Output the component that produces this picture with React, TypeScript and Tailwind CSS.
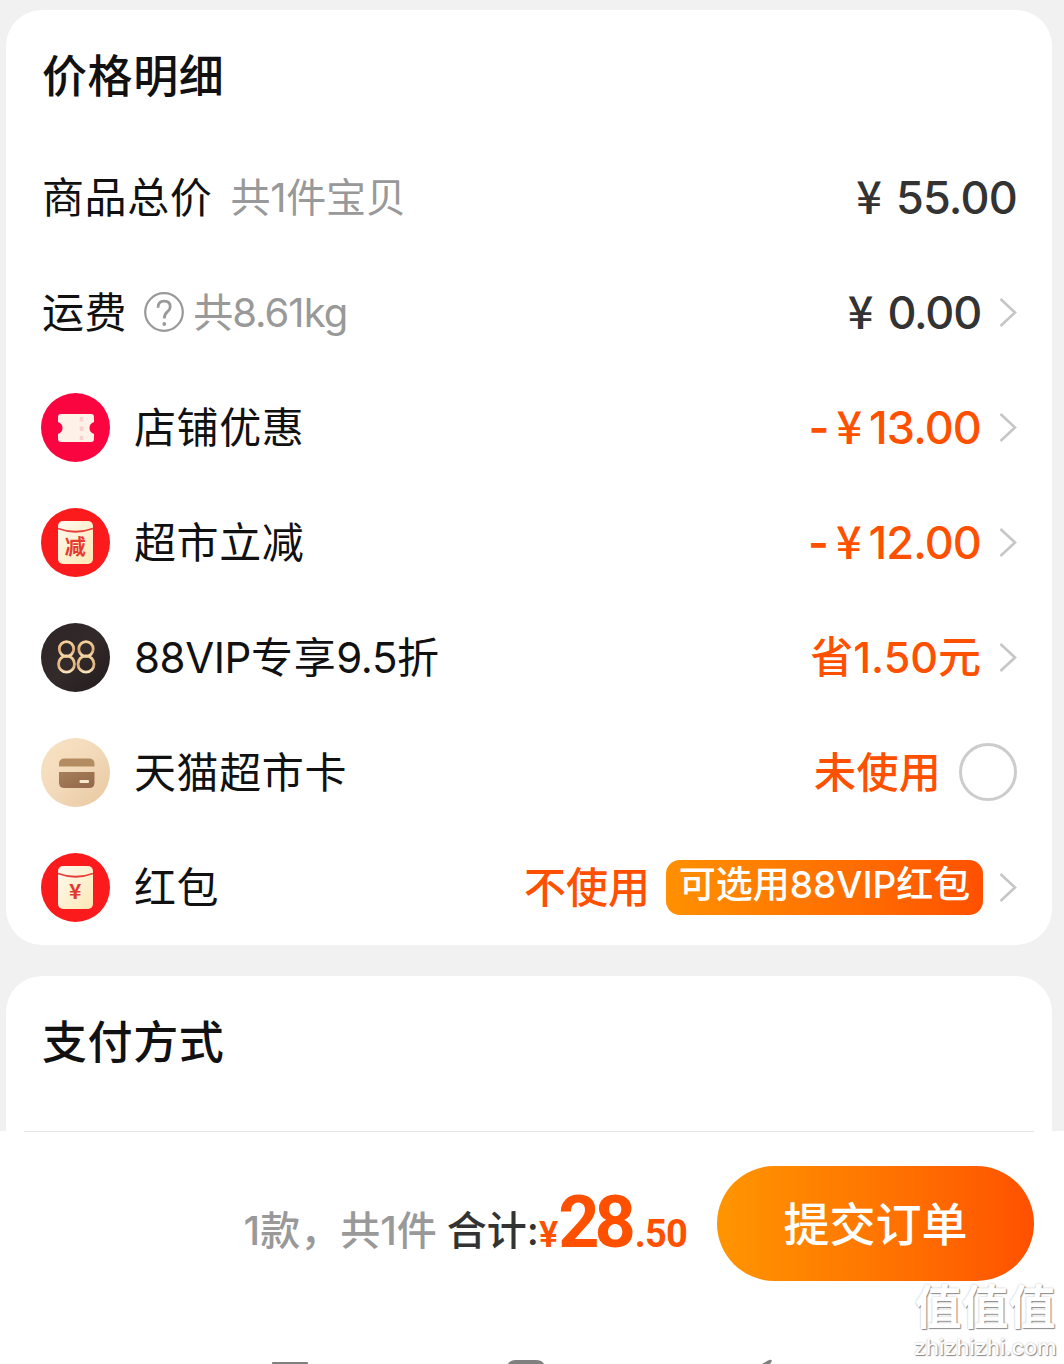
import React from 'react';

type RowIcon = 'coupon' | 'minus' | 'vip' | 'card' | 'packet';

interface RowProps {
  icon?: RowIcon;
  label: React.ReactNode;
  children: React.ReactNode;
}

const Envelope: React.FC<{ id: string }> = ({ id }) => (
  <>
    <defs>
      <linearGradient id={id} x1="0" y1="0" x2="1" y2="1">
        <stop offset="0" stopColor="#fffaf0" />
        <stop offset="1" stopColor="#fce8b4" />
      </linearGradient>
    </defs>
    <circle cx="34.5" cy="34.5" r="34.5" fill="#fb1a1c" />
    <rect x="17" y="13" width="35" height="43" rx="5" fill={`url(#${id})`} />
    <path d="M17 20.5 Q34.5 27 52 20.5" fill="none" stroke="#e8403a" strokeWidth="1.8" />
  </>
);

const Badge: React.FC<{ type: RowIcon }> = ({ type }) => (
  <svg viewBox="0 0 69 69" className="h-[69px] w-[69px] shrink-0">
    {type === 'coupon' && (
      <>
        <circle cx="34.5" cy="34.5" r="34.5" fill="#fb0540" />
        <path
          d="M20 21 H50 Q53 21 53 24 V29 Q48.5 30.5 48.5 35 Q48.5 39.5 53 41 V46 Q53 49 50 49 H20 Q17 49 17 46 V41 Q21.5 39.5 21.5 35 Q21.5 30.5 17 29 V24 Q17 21 20 21 Z"
          fill="#fdf1e8"
        />
        <path d="M40.5 24 V47" stroke="#fbcfcd" strokeWidth="3.5" strokeDasharray="4.5 5" />
      </>
    )}
    {type === 'minus' && (
      <>
        <Envelope id="env-minus" />
        <text x="34.5" y="46" textAnchor="middle" fontSize="21" fontWeight="700" fill="#e8392f" fontFamily="'Noto Sans CJK SC', sans-serif">
          减
        </text>
      </>
    )}
    {type === 'vip' && (
      <>
        <defs>
          <linearGradient id="vip-bg" x1="0" y1="0" x2="1" y2="1">
            <stop offset="0" stopColor="#2c2526" />
            <stop offset="0.5" stopColor="#332a2a" />
            <stop offset="1" stopColor="#231c1c" />
          </linearGradient>
          <linearGradient id="vip-line" x1="0" y1="0" x2="0" y2="1">
            <stop offset="0" stopColor="#f6d39c" />
            <stop offset="0.6" stopColor="#dcae78" />
            <stop offset="1" stopColor="#fbe5be" />
          </linearGradient>
        </defs>
        <circle cx="34.5" cy="34.5" r="34.5" fill="url(#vip-bg)" />
        <g fill="none" stroke="url(#vip-line)" strokeWidth="2.8">
          <ellipse cx="25.5" cy="26" rx="7.2" ry="7.4" />
          <ellipse cx="25.5" cy="41" rx="8" ry="8.2" />
          <ellipse cx="45" cy="26" rx="7.2" ry="7.4" />
          <ellipse cx="45" cy="41" rx="8" ry="8.2" />
        </g>
      </>
    )}
    {type === 'card' && (
      <>
        <defs>
          <linearGradient id="card-bg" x1="0" y1="0" x2="1" y2="1">
            <stop offset="0" stopColor="#f9e3c4" />
            <stop offset="0.5" stopColor="#f2d9b9" />
            <stop offset="1" stopColor="#e8c79f" />
          </linearGradient>
          <linearGradient id="card-fill" x1="0" y1="0" x2="1" y2="1">
            <stop offset="0" stopColor="#a67f5b" />
            <stop offset="1" stopColor="#936749" />
          </linearGradient>
        </defs>
        <circle cx="34.5" cy="34.5" r="34.5" fill="url(#card-bg)" />
        <path d="M18 28.5 V26 Q18 20.5 23.5 20.5 H48 Q53.5 20.5 53.5 26 V28.5 Z" fill="#b38d61" />
        <path d="M18 34 H53.5 V44.5 Q53.5 50 48 50 H23.5 Q18 50 18 44.5 Z" fill="url(#card-fill)" />
        <rect x="38.5" y="42" width="9.5" height="3" rx="1" fill="#f8e6cf" />
      </>
    )}
    {type === 'packet' && (
      <>
        <Envelope id="env-packet" />
        <text x="34.5" y="46" textAnchor="middle" fontSize="21" fontWeight="700" fill="#e03a34" fontFamily="'Noto Sans CJK SC', sans-serif">
          ¥
        </text>
      </>
    )}
  </svg>
);

const Chevron = () => (
  <svg viewBox="0 0 18 30" className="ml-[18px] h-[30px] w-[18px] shrink-0">
    <path d="M1.5 1 L16 14.5 L1.5 28" fill="none" stroke="#c6c6c6" strokeWidth="2.6" />
  </svg>
);

const Yen = () => <span className="mb-[7px] font-['Noto_Sans_CJK_SC',sans-serif] text-[45px] font-medium">¥</span>;

const Row: React.FC<RowProps> = ({ icon, label, children }) => (
  <div className="flex h-[115px] items-center justify-between">
    <div className="flex items-center text-[42px] leading-none tracking-[0.6px] text-[#111]">
      {icon && (
        <span className="mr-6">
          <Badge type={icon} />
        </span>
      )}
      {label}
    </div>
    <div className="flex items-center text-[45px] leading-none font-medium text-[#ff5000]">{children}</div>
  </div>
);

export default function App() {
  return (
    <div className="relative flex h-[1364px] w-[1064px] flex-col overflow-hidden bg-[#f1f1f1] font-[Inter,'Noto_Sans_CJK_SC',sans-serif] leading-none whitespace-nowrap">
      {/* Price details */}
      <section className="mt-[10px] mr-3 ml-1.5 h-[935px] rounded-[36px] bg-white px-[35px]">
        <h2 className="flex h-[132px] items-center pl-px text-[45px] font-medium tracking-[0.6px] text-[#111]">价格明细</h2>

        <div className="-mt-0.5">
          <Row
            label={
              <>
                <span className="pl-px">商品总价</span>
                <span className="ml-[18px] text-[40px] tracking-[-0.2px] text-[#999]">共1件宝贝</span>
              </>
            }
          >
            <span className="flex items-center gap-3.5 text-[#333]">
              <Yen />
              <span className="tracking-[-0.8px]">55.00</span>
            </span>
          </Row>

          <Row
            label={
              <>
                <span className="pl-px">运费</span>
                <svg viewBox="0 0 40 40" className="mr-[9px] mb-0.5 ml-[17px] h-10 w-10" fill="none" stroke="#999" strokeWidth="2.2">
                  <circle cx="20" cy="20" r="18.8" />
                  <path d="M14 15.8 Q14 9.2 20.2 9.2 Q26.2 9.2 26.2 14.8 Q26.2 17.4 23.5 19.6 Q20.3 22 20.3 26.5" strokeWidth="2.8" />
                  <circle cx="20.3" cy="32" r="1.2" fill="#999" strokeWidth="1.4" />
                </svg>
                <span className="text-[40px] tracking-[-1px] text-[#999]">共8.61kg</span>
              </>
            }
          >
            <span className="flex items-center gap-3.5 text-[#333]">
              <Yen />
              <span className="tracking-[-1.2px]">0.00</span>
            </span>
            <Chevron />
          </Row>

          <Row icon="coupon" label="店铺优惠">
            <span className="mr-[7px] font-semibold">-</span>
            <Yen />
            <span className="ml-[7px] tracking-[-0.9px]">13.00</span>
            <Chevron />
          </Row>

          <Row icon="minus" label="超市立减">
            <span className="mr-[7px] font-semibold">-</span>
            <Yen />
            <span className="ml-[7px] tracking-[-0.9px]">12.00</span>
            <Chevron />
          </Row>

          <Row
            icon="vip"
            label={
              <span>
                <span className="tracking-[-0.4px]">88VIP</span>专享<span className="tracking-[-0.4px]">9.5</span>折
              </span>
            }
          >
            <span className="text-[43px]">省1.50元</span>
            <Chevron />
          </Row>

          <Row icon="card" label="天猫超市卡">
            <span className="text-[42px] tracking-[0.3px]">未使用</span>
            <span className="mb-0.5 ml-[18px] h-[58px] w-[58px] rounded-full border-[3px] border-[#ccc]" />
          </Row>

          <Row icon="packet" label="红包">
            <span className="text-[42px]">不使用</span>
            <span className="-mr-0.5 ml-4 flex h-[55px] w-[317px] items-center justify-center rounded-[14px] bg-linear-to-r from-[#ff9000] to-[#ff5000] pb-1.5 text-[37px] text-white">
              可选用88VIP红包
            </span>
            <Chevron />
          </Row>
        </div>
      </section>

      {/* Payment method */}
      <section className="mt-[31px] mr-3 ml-1.5 h-[155px] shrink-0 rounded-t-[36px] bg-white px-[35px]">
        <h2 className="flex h-[132px] items-center pl-px text-[45px] font-medium tracking-[0.6px] text-[#111]">支付方式</h2>
      </section>

      {/* Submit bar */}
      <footer className="flex flex-1 flex-col bg-white">
        <div className="mr-[30px] ml-6 h-px bg-[#e5e5e5]" />
        <div className="mt-[34px] mr-[30px] flex h-[115px] items-center justify-end">
          <span className="mt-3.5 text-[40px] font-medium text-[#999]">1款，共1件</span>
          <span className="mt-3.5 ml-2.5 text-[40px] font-medium text-[#333]">合计:</span>
          <span className="-mt-0.5 flex items-baseline font-[Roboto,sans-serif] font-bold text-[#ff5000]">
            <span className="text-[36px] font-semibold">¥</span>
            <span className="text-[72px] tracking-[-5px]">28</span>
            <span className="ml-1 text-[38px] tracking-[-0.8px]">.50</span>
          </span>
          <button className="ml-[30px] h-[115px] w-[317px] rounded-full bg-linear-to-r from-[#ff9500] to-[#ff5000] text-[46px] font-medium text-white">
            提交订单
          </button>
        </div>
      </footer>

      {/* System navigation keys, cut off by the screen edge */}
      <div className="absolute top-[1359px] left-[272px] flex h-[5px] w-[504px] overflow-hidden">
        <svg viewBox="0 0 504 5" className="h-[5px] w-[504px]" fill="#808080">
          <path d="M0 5 V4 Q0 3 1 3 H35 Q36 3 36 4 V5 Z" />
          <path d="M236 5 Q238 1 244 1 H264 Q270 1 272 5 Z" />
          <path d="M490 5 L496 1.5 Q499 0 500 2 L498 5 Z" />
        </svg>
      </div>

      {/* Watermark */}
      <div className="absolute top-[1284px] right-[7px] flex w-[144px] flex-col items-center text-white [text-shadow:1px_1px_1px_#8a8a8a,0_0_2px_#bbb]">
        <span className="font-['Liberation_Sans','Noto_Sans_CJK_SC',sans-serif] text-[47px] font-bold">值值值</span>
        <span className="mt-[5px] font-[Inter,sans-serif] text-[22px] font-medium tracking-[-0.2px]">zhizhizhi.com</span>
      </div>
    </div>
  );
}
